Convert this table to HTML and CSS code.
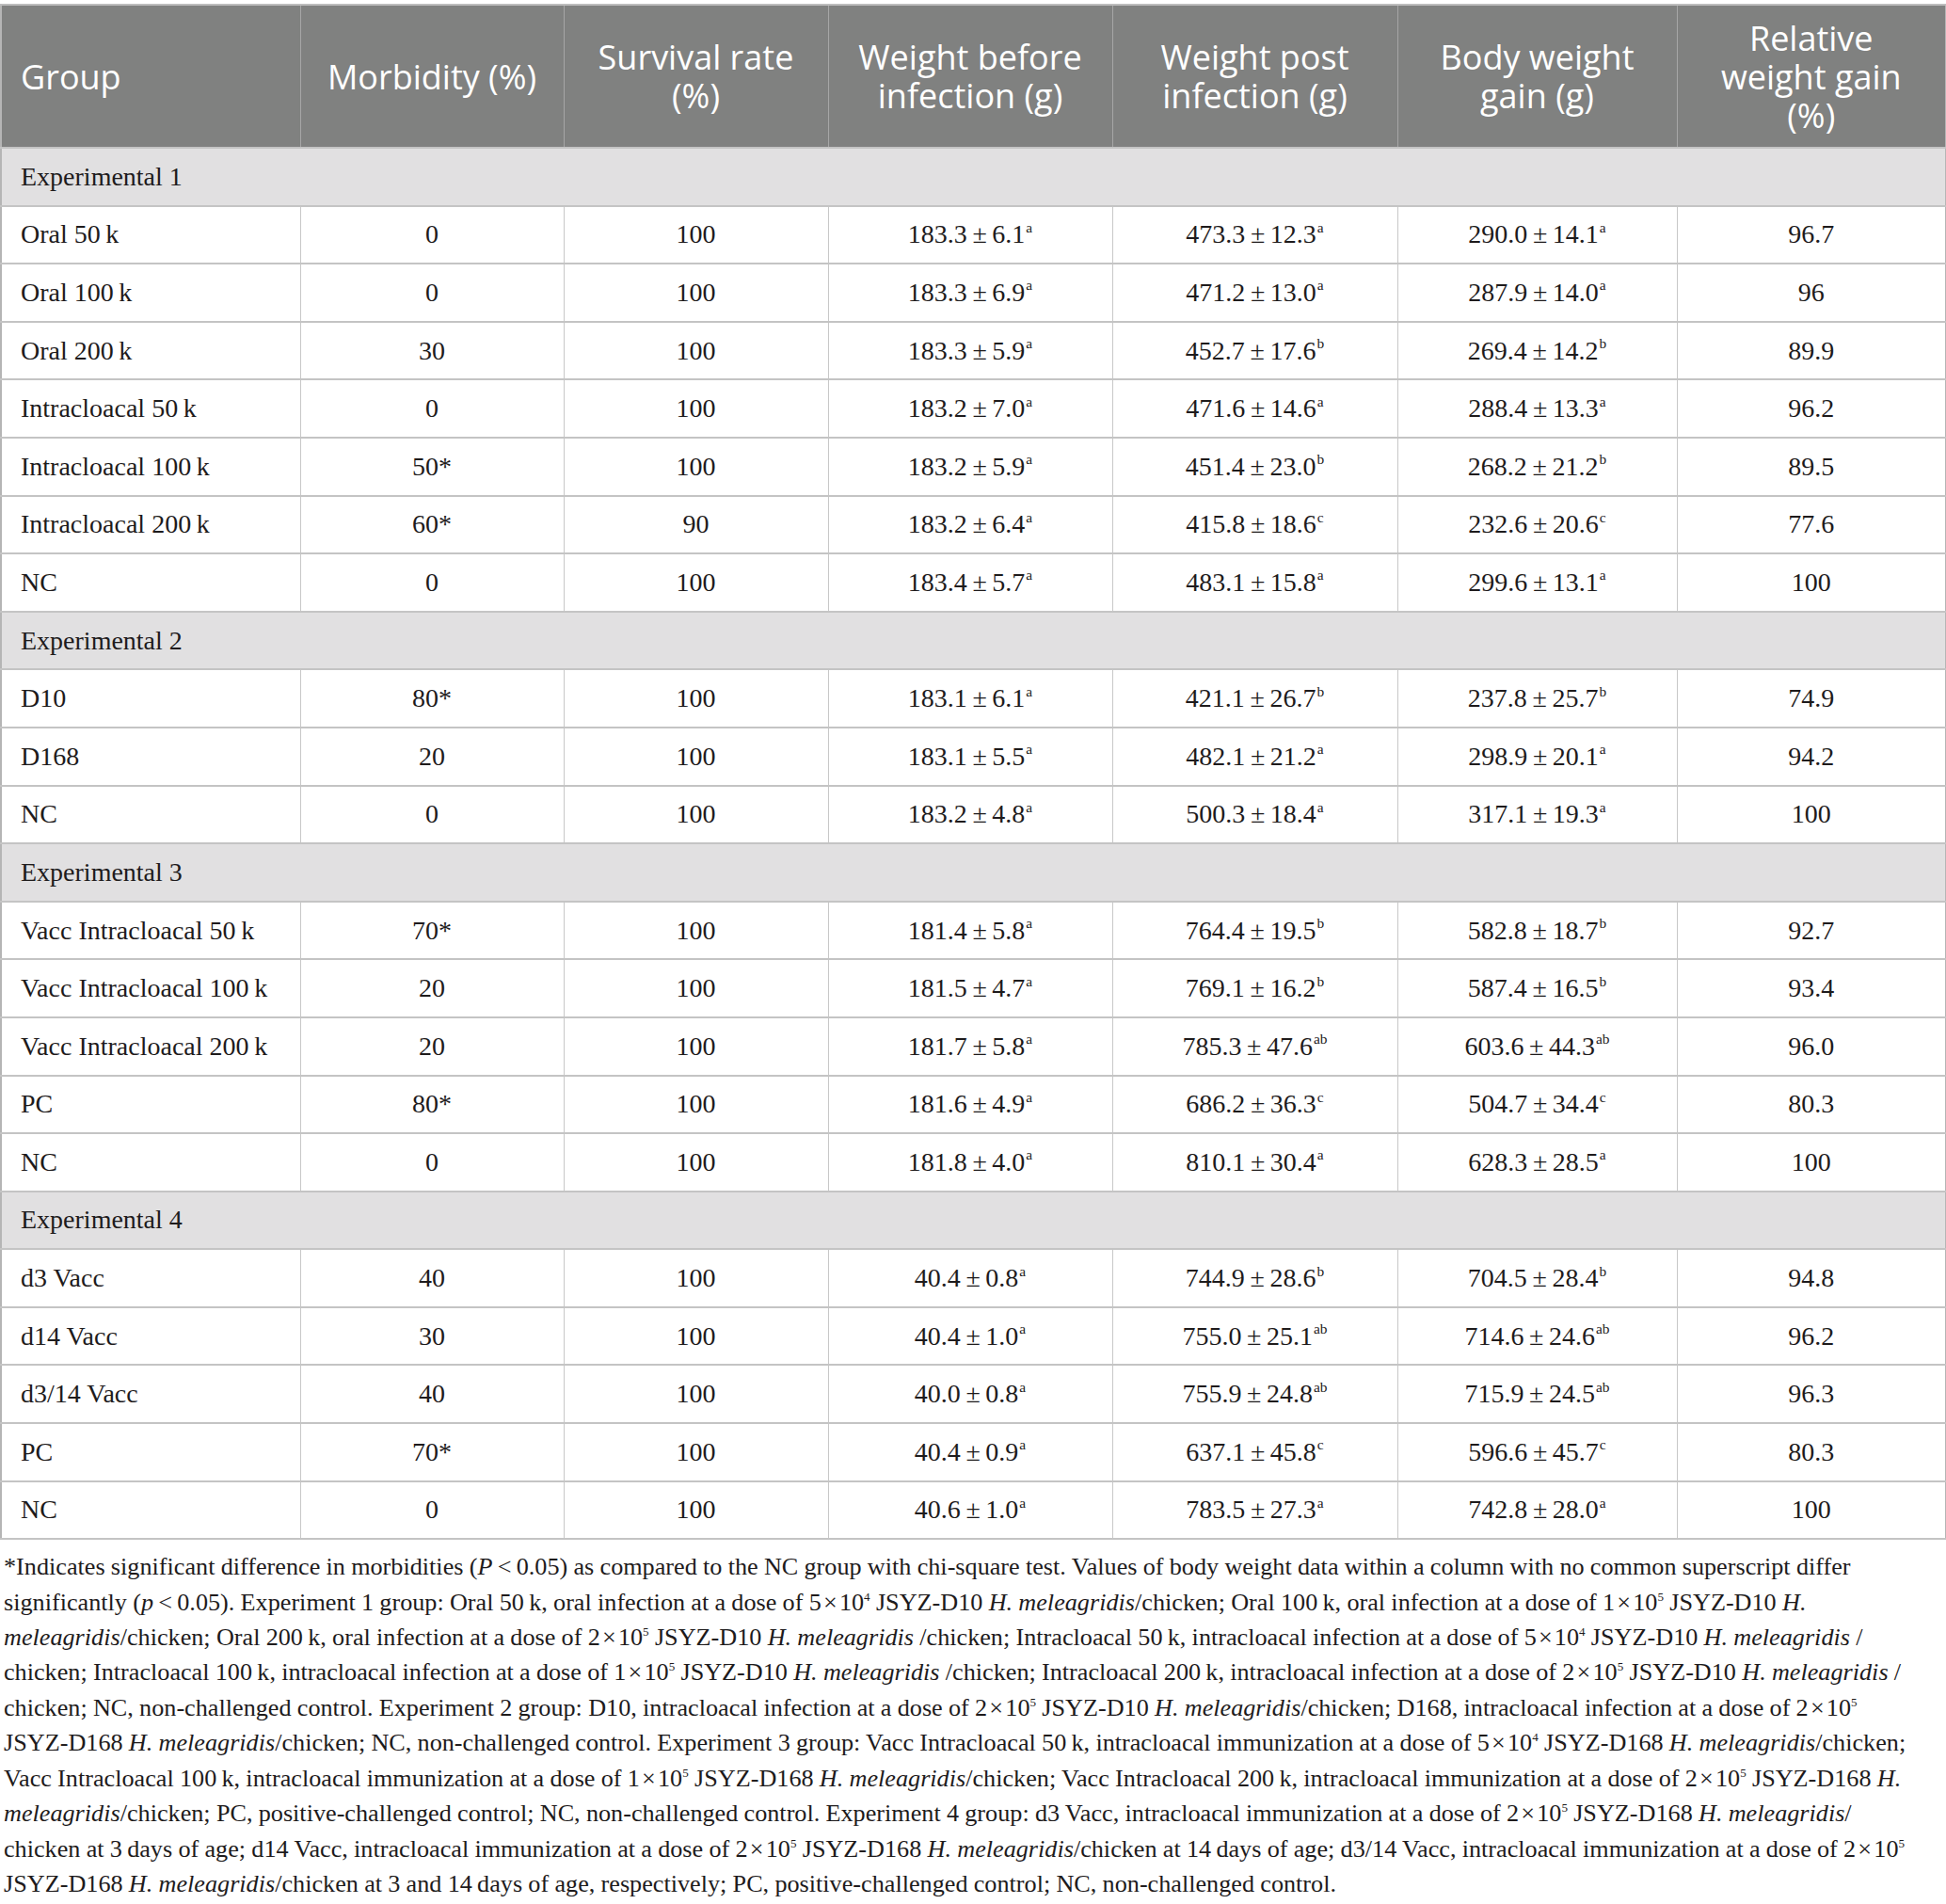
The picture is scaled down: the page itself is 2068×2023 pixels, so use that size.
FILE: index.html
```html
<!DOCTYPE html>
<html lang="en">
<head>
<meta charset="utf-8">
<title>Table</title>
<link rel="stylesheet" href="styles.css">
</head>
<body>
<div class="page">
<table class="data">
<colgroup>
<col class="c1"><col class="c2"><col class="c3"><col class="c4"><col class="c5"><col class="c6"><col class="c7">
</colgroup>
<thead>
<tr>
<th class="first">Group</th>
<th>Morbidity (%)</th>
<th>Survival rate<br>(%)</th>
<th>Weight before<br>infection (g)</th>
<th>Weight post<br>infection (g)</th>
<th>Body weight<br>gain (g)</th>
<th>Relative<br>weight gain<br>(%)</th>
</tr>
</thead>
<tbody>
<tr class="section"><td colspan="7">Experimental 1</td></tr>
<tr><td class="name">Oral 50&#8201;k</td><td>0</td><td>100</td><td>183.3&#8201;±&#8201;6.1<sup>a</sup></td><td>473.3&#8201;±&#8201;12.3<sup>a</sup></td><td>290.0&#8201;±&#8201;14.1<sup>a</sup></td><td>96.7</td></tr>
<tr><td class="name">Oral 100&#8201;k</td><td>0</td><td>100</td><td>183.3&#8201;±&#8201;6.9<sup>a</sup></td><td>471.2&#8201;±&#8201;13.0<sup>a</sup></td><td>287.9&#8201;±&#8201;14.0<sup>a</sup></td><td>96</td></tr>
<tr><td class="name">Oral 200&#8201;k</td><td>30</td><td>100</td><td>183.3&#8201;±&#8201;5.9<sup>a</sup></td><td>452.7&#8201;±&#8201;17.6<sup>b</sup></td><td>269.4&#8201;±&#8201;14.2<sup>b</sup></td><td>89.9</td></tr>
<tr><td class="name">Intracloacal 50&#8201;k</td><td>0</td><td>100</td><td>183.2&#8201;±&#8201;7.0<sup>a</sup></td><td>471.6&#8201;±&#8201;14.6<sup>a</sup></td><td>288.4&#8201;±&#8201;13.3<sup>a</sup></td><td>96.2</td></tr>
<tr><td class="name">Intracloacal 100&#8201;k</td><td>50*</td><td>100</td><td>183.2&#8201;±&#8201;5.9<sup>a</sup></td><td>451.4&#8201;±&#8201;23.0<sup>b</sup></td><td>268.2&#8201;±&#8201;21.2<sup>b</sup></td><td>89.5</td></tr>
<tr><td class="name">Intracloacal 200&#8201;k</td><td>60*</td><td>90</td><td>183.2&#8201;±&#8201;6.4<sup>a</sup></td><td>415.8&#8201;±&#8201;18.6<sup>c</sup></td><td>232.6&#8201;±&#8201;20.6<sup>c</sup></td><td>77.6</td></tr>
<tr><td class="name">NC</td><td>0</td><td>100</td><td>183.4&#8201;±&#8201;5.7<sup>a</sup></td><td>483.1&#8201;±&#8201;15.8<sup>a</sup></td><td>299.6&#8201;±&#8201;13.1<sup>a</sup></td><td>100</td></tr>
<tr class="section"><td colspan="7">Experimental 2</td></tr>
<tr><td class="name">D10</td><td>80*</td><td>100</td><td>183.1&#8201;±&#8201;6.1<sup>a</sup></td><td>421.1&#8201;±&#8201;26.7<sup>b</sup></td><td>237.8&#8201;±&#8201;25.7<sup>b</sup></td><td>74.9</td></tr>
<tr><td class="name">D168</td><td>20</td><td>100</td><td>183.1&#8201;±&#8201;5.5<sup>a</sup></td><td>482.1&#8201;±&#8201;21.2<sup>a</sup></td><td>298.9&#8201;±&#8201;20.1<sup>a</sup></td><td>94.2</td></tr>
<tr><td class="name">NC</td><td>0</td><td>100</td><td>183.2&#8201;±&#8201;4.8<sup>a</sup></td><td>500.3&#8201;±&#8201;18.4<sup>a</sup></td><td>317.1&#8201;±&#8201;19.3<sup>a</sup></td><td>100</td></tr>
<tr class="section"><td colspan="7">Experimental 3</td></tr>
<tr><td class="name">Vacc Intracloacal 50&#8201;k</td><td>70*</td><td>100</td><td>181.4&#8201;±&#8201;5.8<sup>a</sup></td><td>764.4&#8201;±&#8201;19.5<sup>b</sup></td><td>582.8&#8201;±&#8201;18.7<sup>b</sup></td><td>92.7</td></tr>
<tr><td class="name">Vacc Intracloacal 100&#8201;k</td><td>20</td><td>100</td><td>181.5&#8201;±&#8201;4.7<sup>a</sup></td><td>769.1&#8201;±&#8201;16.2<sup>b</sup></td><td>587.4&#8201;±&#8201;16.5<sup>b</sup></td><td>93.4</td></tr>
<tr><td class="name">Vacc Intracloacal 200&#8201;k</td><td>20</td><td>100</td><td>181.7&#8201;±&#8201;5.8<sup>a</sup></td><td>785.3&#8201;±&#8201;47.6<sup>ab</sup></td><td>603.6&#8201;±&#8201;44.3<sup>ab</sup></td><td>96.0</td></tr>
<tr><td class="name">PC</td><td>80*</td><td>100</td><td>181.6&#8201;±&#8201;4.9<sup>a</sup></td><td>686.2&#8201;±&#8201;36.3<sup>c</sup></td><td>504.7&#8201;±&#8201;34.4<sup>c</sup></td><td>80.3</td></tr>
<tr><td class="name">NC</td><td>0</td><td>100</td><td>181.8&#8201;±&#8201;4.0<sup>a</sup></td><td>810.1&#8201;±&#8201;30.4<sup>a</sup></td><td>628.3&#8201;±&#8201;28.5<sup>a</sup></td><td>100</td></tr>
<tr class="section"><td colspan="7">Experimental 4</td></tr>
<tr><td class="name">d3 Vacc</td><td>40</td><td>100</td><td>40.4&#8201;±&#8201;0.8<sup>a</sup></td><td>744.9&#8201;±&#8201;28.6<sup>b</sup></td><td>704.5&#8201;±&#8201;28.4<sup>b</sup></td><td>94.8</td></tr>
<tr><td class="name">d14 Vacc</td><td>30</td><td>100</td><td>40.4&#8201;±&#8201;1.0<sup>a</sup></td><td>755.0&#8201;±&#8201;25.1<sup>ab</sup></td><td>714.6&#8201;±&#8201;24.6<sup>ab</sup></td><td>96.2</td></tr>
<tr><td class="name">d3/14 Vacc</td><td>40</td><td>100</td><td>40.0&#8201;±&#8201;0.8<sup>a</sup></td><td>755.9&#8201;±&#8201;24.8<sup>ab</sup></td><td>715.9&#8201;±&#8201;24.5<sup>ab</sup></td><td>96.3</td></tr>
<tr><td class="name">PC</td><td>70*</td><td>100</td><td>40.4&#8201;±&#8201;0.9<sup>a</sup></td><td>637.1&#8201;±&#8201;45.8<sup>c</sup></td><td>596.6&#8201;±&#8201;45.7<sup>c</sup></td><td>80.3</td></tr>
<tr><td class="name">NC</td><td>0</td><td>100</td><td>40.6&#8201;±&#8201;1.0<sup>a</sup></td><td>783.5&#8201;±&#8201;27.3<sup>a</sup></td><td>742.8&#8201;±&#8201;28.0<sup>a</sup></td><td>100</td></tr>
</tbody>
</table>
<p class="note">*Indicates significant difference in morbidities (<i>P</i>&#8201;&lt;&#8201;0.05) as compared to the NC group with chi-square test. Values of body weight data within a column with no common superscript differ<br>
significantly (<i>p</i>&#8201;&lt;&#8201;0.05). Experiment 1 group: Oral 50&#8201;k, oral infection at a dose of 5&#8202;×&#8202;10<sup>4</sup> JSYZ-D10 <i>H. meleagridis</i>/chicken; Oral 100&#8201;k, oral infection at a dose of 1&#8202;×&#8202;10<sup>5</sup> JSYZ-D10 <i>H.</i><br>
<i>meleagridis</i>/chicken; Oral 200&#8201;k, oral infection at a dose of 2&#8202;×&#8202;10<sup>5</sup> JSYZ-D10 <i>H. meleagridis</i> /chicken; Intracloacal 50&#8201;k, intracloacal infection at a dose of 5&#8202;×&#8202;10<sup>4</sup> JSYZ-D10 <i>H. meleagridis</i> /<br>
chicken; Intracloacal 100&#8201;k, intracloacal infection at a dose of 1&#8202;×&#8202;10<sup>5</sup> JSYZ-D10 <i>H. meleagridis</i> /chicken; Intracloacal 200&#8201;k, intracloacal infection at a dose of 2&#8202;×&#8202;10<sup>5</sup> JSYZ-D10 <i>H. meleagridis</i> /<br>
chicken; NC, non-challenged control. Experiment 2 group: D10, intracloacal infection at a dose of 2&#8202;×&#8202;10<sup>5</sup> JSYZ-D10 <i>H. meleagridis</i>/chicken; D168, intracloacal infection at a dose of 2&#8202;×&#8202;10<sup>5</sup><br>
JSYZ-D168 <i>H. meleagridis</i>/chicken; NC, non-challenged control. Experiment 3 group: Vacc Intracloacal 50&#8201;k, intracloacal immunization at a dose of 5&#8202;×&#8202;10<sup>4</sup> JSYZ-D168 <i>H. meleagridis</i>/chicken;<br>
Vacc Intracloacal 100&#8201;k, intracloacal immunization at a dose of 1&#8202;×&#8202;10<sup>5</sup> JSYZ-D168 <i>H. meleagridis</i>/chicken; Vacc Intracloacal 200&#8201;k, intracloacal immunization at a dose of 2&#8202;×&#8202;10<sup>5</sup> JSYZ-D168 <i>H.</i><br>
<i>meleagridis</i>/chicken; PC, positive-challenged control; NC, non-challenged control. Experiment 4 group: d3 Vacc, intracloacal immunization at a dose of 2&#8202;×&#8202;10<sup>5</sup> JSYZ-D168 <i>H. meleagridis</i>/<br>
chicken at 3&#8201;days of age; d14 Vacc, intracloacal immunization at a dose of 2&#8202;×&#8202;10<sup>5</sup> JSYZ-D168 <i>H. meleagridis</i>/chicken at 14&#8201;days of age; d3/14 Vacc, intracloacal immunization at a dose of 2&#8202;×&#8202;10<sup>5</sup><br>
JSYZ-D168 <i>H. meleagridis</i>/chicken at 3 and 14&#8201;days of age, respectively; PC, positive-challenged control; NC, non-challenged control.</p>
</div>
</body>
</html>
```

FILE: styles.css
```css
html, body {
  margin: 0;
  padding: 0;
  background: #ffffff;
}

.page {
  padding-top: 4px;
  width: 2068px;
}

.data {
  border-collapse: collapse;
  table-layout: fixed;
  width: 2067px;
  font-family: "Liberation Serif", "Times New Roman", serif;
  font-size: 28px;
  color: #1e1b1c;
  border: 2px solid #b5b5b5;
}

.c1 { width: 318px; }
.c2 { width: 280px; }
.c3 { width: 281px; }
.c4 { width: 302px; }
.c5 { width: 303px; }
.c6 { width: 297px; }
.c7 { width: 286px; }

.data th {
  background: #808180;
  color: #ffffff;
  font-family: "Open Sans", "Liberation Sans", sans-serif;
  font-weight: 400;
  font-size: 36px;
  line-height: 41px;
  height: 150px;
  padding: 0 8px;
  text-align: center;
  vertical-align: middle;
  border: 1px solid #a6a6a6;
  border-top: 2px solid #bdbdbd;
}

.data th.first {
  text-align: left;
  padding-left: 20px;
}

.data tbody tr {
  height: 61.6px;
}

.data td {
  padding: 0 8px;
  text-align: center;
  vertical-align: middle;
  border-top: 2px solid #c4c4c4;
  border-bottom: 2px solid #c4c4c4;
  border-left: 1px solid #c8c8c8;
  border-right: 1px solid #c8c8c8;
  white-space: nowrap;
}

.data td.name {
  text-align: left;
  padding-left: 20px;
}

.data tr.section td {
  background: #e1e0e1;
  text-align: left;
  padding-left: 20px;
}

.data sup {
  font-size: 0.55em;
  line-height: 0;
  vertical-align: 0.75em;
  margin-left: 1px;
}

.note {
  margin: 10px 0 0 0;
  padding: 0 0 0 4px;
  font-family: "Liberation Serif", "Times New Roman", serif;
  font-size: 26.2px;
  line-height: 37.4px;
  word-spacing: -0.3px;
  color: #1e1b1c;
  white-space: nowrap;
}

.note sup {
  font-size: 0.5em;
  line-height: 0;
  vertical-align: 0.8em;
}
```
